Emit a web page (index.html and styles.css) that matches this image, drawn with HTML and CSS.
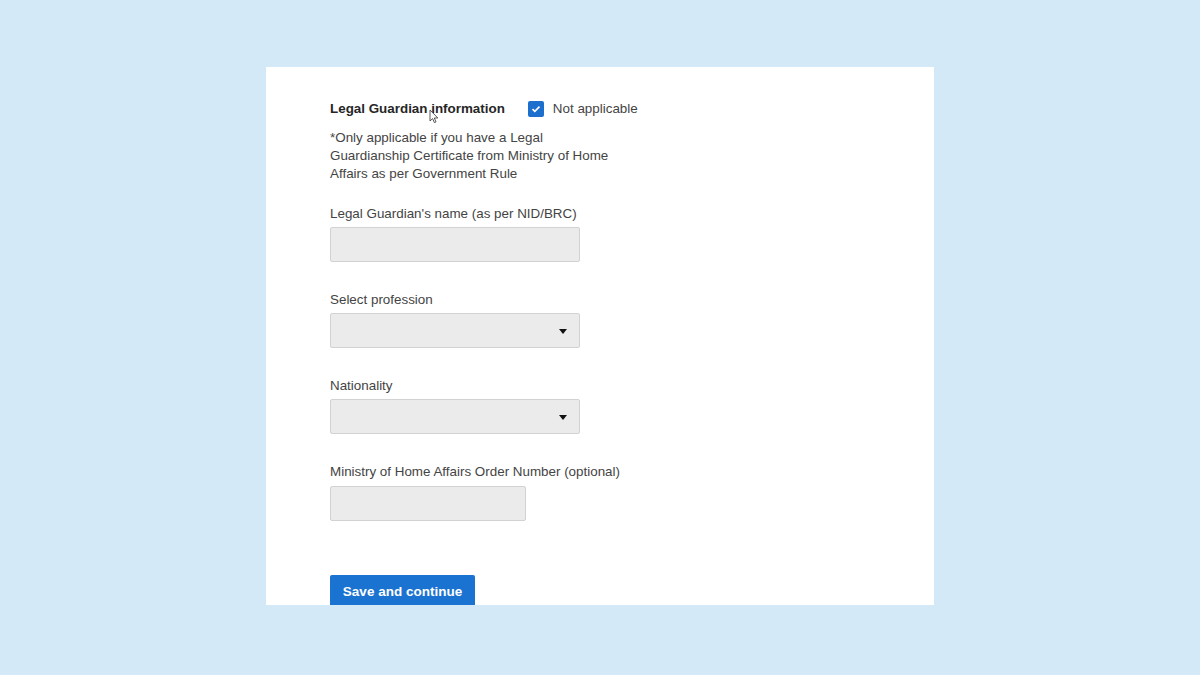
FILE: index.html
```html
<!DOCTYPE html>
<html>
<head>
<meta charset="utf-8">
<link rel="stylesheet" href="styles.css">
</head>
<body>
<div class="card">
  <div class="head">
    <span class="title">Legal Guardian information</span>
    <label class="check">
      <span class="box"><svg width="10" height="8" viewBox="0 0 10 8"><path d="M1.5 4.2 L3.8 6.3 L8.5 1.6" fill="none" stroke="#fff" stroke-width="1.6"/></svg></span>
      <span>Not applicable</span>
    </label>
    <svg class="cursor" width="10" height="15" viewBox="0 0 10 15"><path d="M1 1 L1 12 L3.6 9.6 L5.4 13.6 L7 12.9 L5.3 9 L8.8 9 Z" fill="#fff" stroke="#444" stroke-width="0.9"/></svg>
  </div>
  <p class="note">*Only applicable if you have a Legal Guardianship Certificate from Ministry of Home Affairs as per Government Rule</p>

  <div class="field">
    <div class="label">Legal Guardian's name (as per NID/BRC)</div>
    <div class="input"></div>
  </div>
  <div class="field">
    <div class="label">Select profession</div>
    <div class="input select"><span class="caret"></span></div>
  </div>
  <div class="field">
    <div class="label">Nationality</div>
    <div class="input select"><span class="caret"></span></div>
  </div>
  <div class="field field-order">
    <div class="label">Ministry of Home Affairs Order Number (optional)</div>
    <div class="input short"></div>
  </div>
  <div class="actions">
    <button class="btn">Save and continue</button>
  </div>
</div>
</body>
</html>
```
FILE: styles.css
```css
html, body {
  margin: 0;
  padding: 0;
}
body {
  background: #d4e9f8;
  width: 1200px;
  height: 675px;
  overflow: hidden;
  font-family: "Liberation Sans", Arial, sans-serif;
  font-size: 13.4px;
  color: #3a3a3a;
}
.card {
  box-sizing: border-box;
  margin: 67px 0 0 266px;
  width: 668px;
  height: 538px;
  background: #fff;
  padding: 33px 0 0 64px;
  overflow: hidden;
}
.head {
  position: relative;
  display: flex;
  align-items: center;
  height: 18px;
  line-height: 18px;
}
.title {
  font-weight: bold;
  color: #262626;
}
.check {
  display: flex;
  align-items: center;
  margin-left: 23px;
  color: #444;
}
.box {
  box-sizing: border-box;
  width: 16px;
  height: 16px;
  background: #1d6fcd;
  border-radius: 2px;
  display: flex;
  align-items: center;
  justify-content: center;
  margin-right: 9px;
}
.cursor {
  position: absolute;
  left: 99px;
  top: 9px;
}
.note {
  margin: 11px 0 0 0;
  width: 290px;
  line-height: 18px;
  color: #444;
}
.field {
  margin-top: 22px;
}
.field + .field {
  margin-top: 29px;
}
.label {
  line-height: 18px;
  color: #444;
  margin-bottom: 4px;
}
.field-order .label {
  margin-bottom: 5px;
}
.input {
  box-sizing: border-box;
  position: relative;
  width: 250px;
  height: 35px;
  background: #ebebeb;
  border: 1px solid #d2d2d2;
  border-radius: 2px;
}
.input.short {
  width: 196px;
}
.caret {
  position: absolute;
  right: 12px;
  top: 15px;
  width: 0;
  height: 0;
  border-left: 4px solid transparent;
  border-right: 4px solid transparent;
  border-top: 5px solid #111;
}
.actions {
  margin-top: 54px;
}
.btn {
  box-sizing: border-box;
  width: 145px;
  height: 34px;
  border: none;
  border-radius: 2px 2px 0 0;
  background: #1a72d1;
  color: #fff;
  font-family: "Liberation Sans", Arial, sans-serif;
  font-size: 13.5px;
  font-weight: bold;
  padding: 0;
  line-height: 30px;
  display: block;
  text-align: center;
}
```
